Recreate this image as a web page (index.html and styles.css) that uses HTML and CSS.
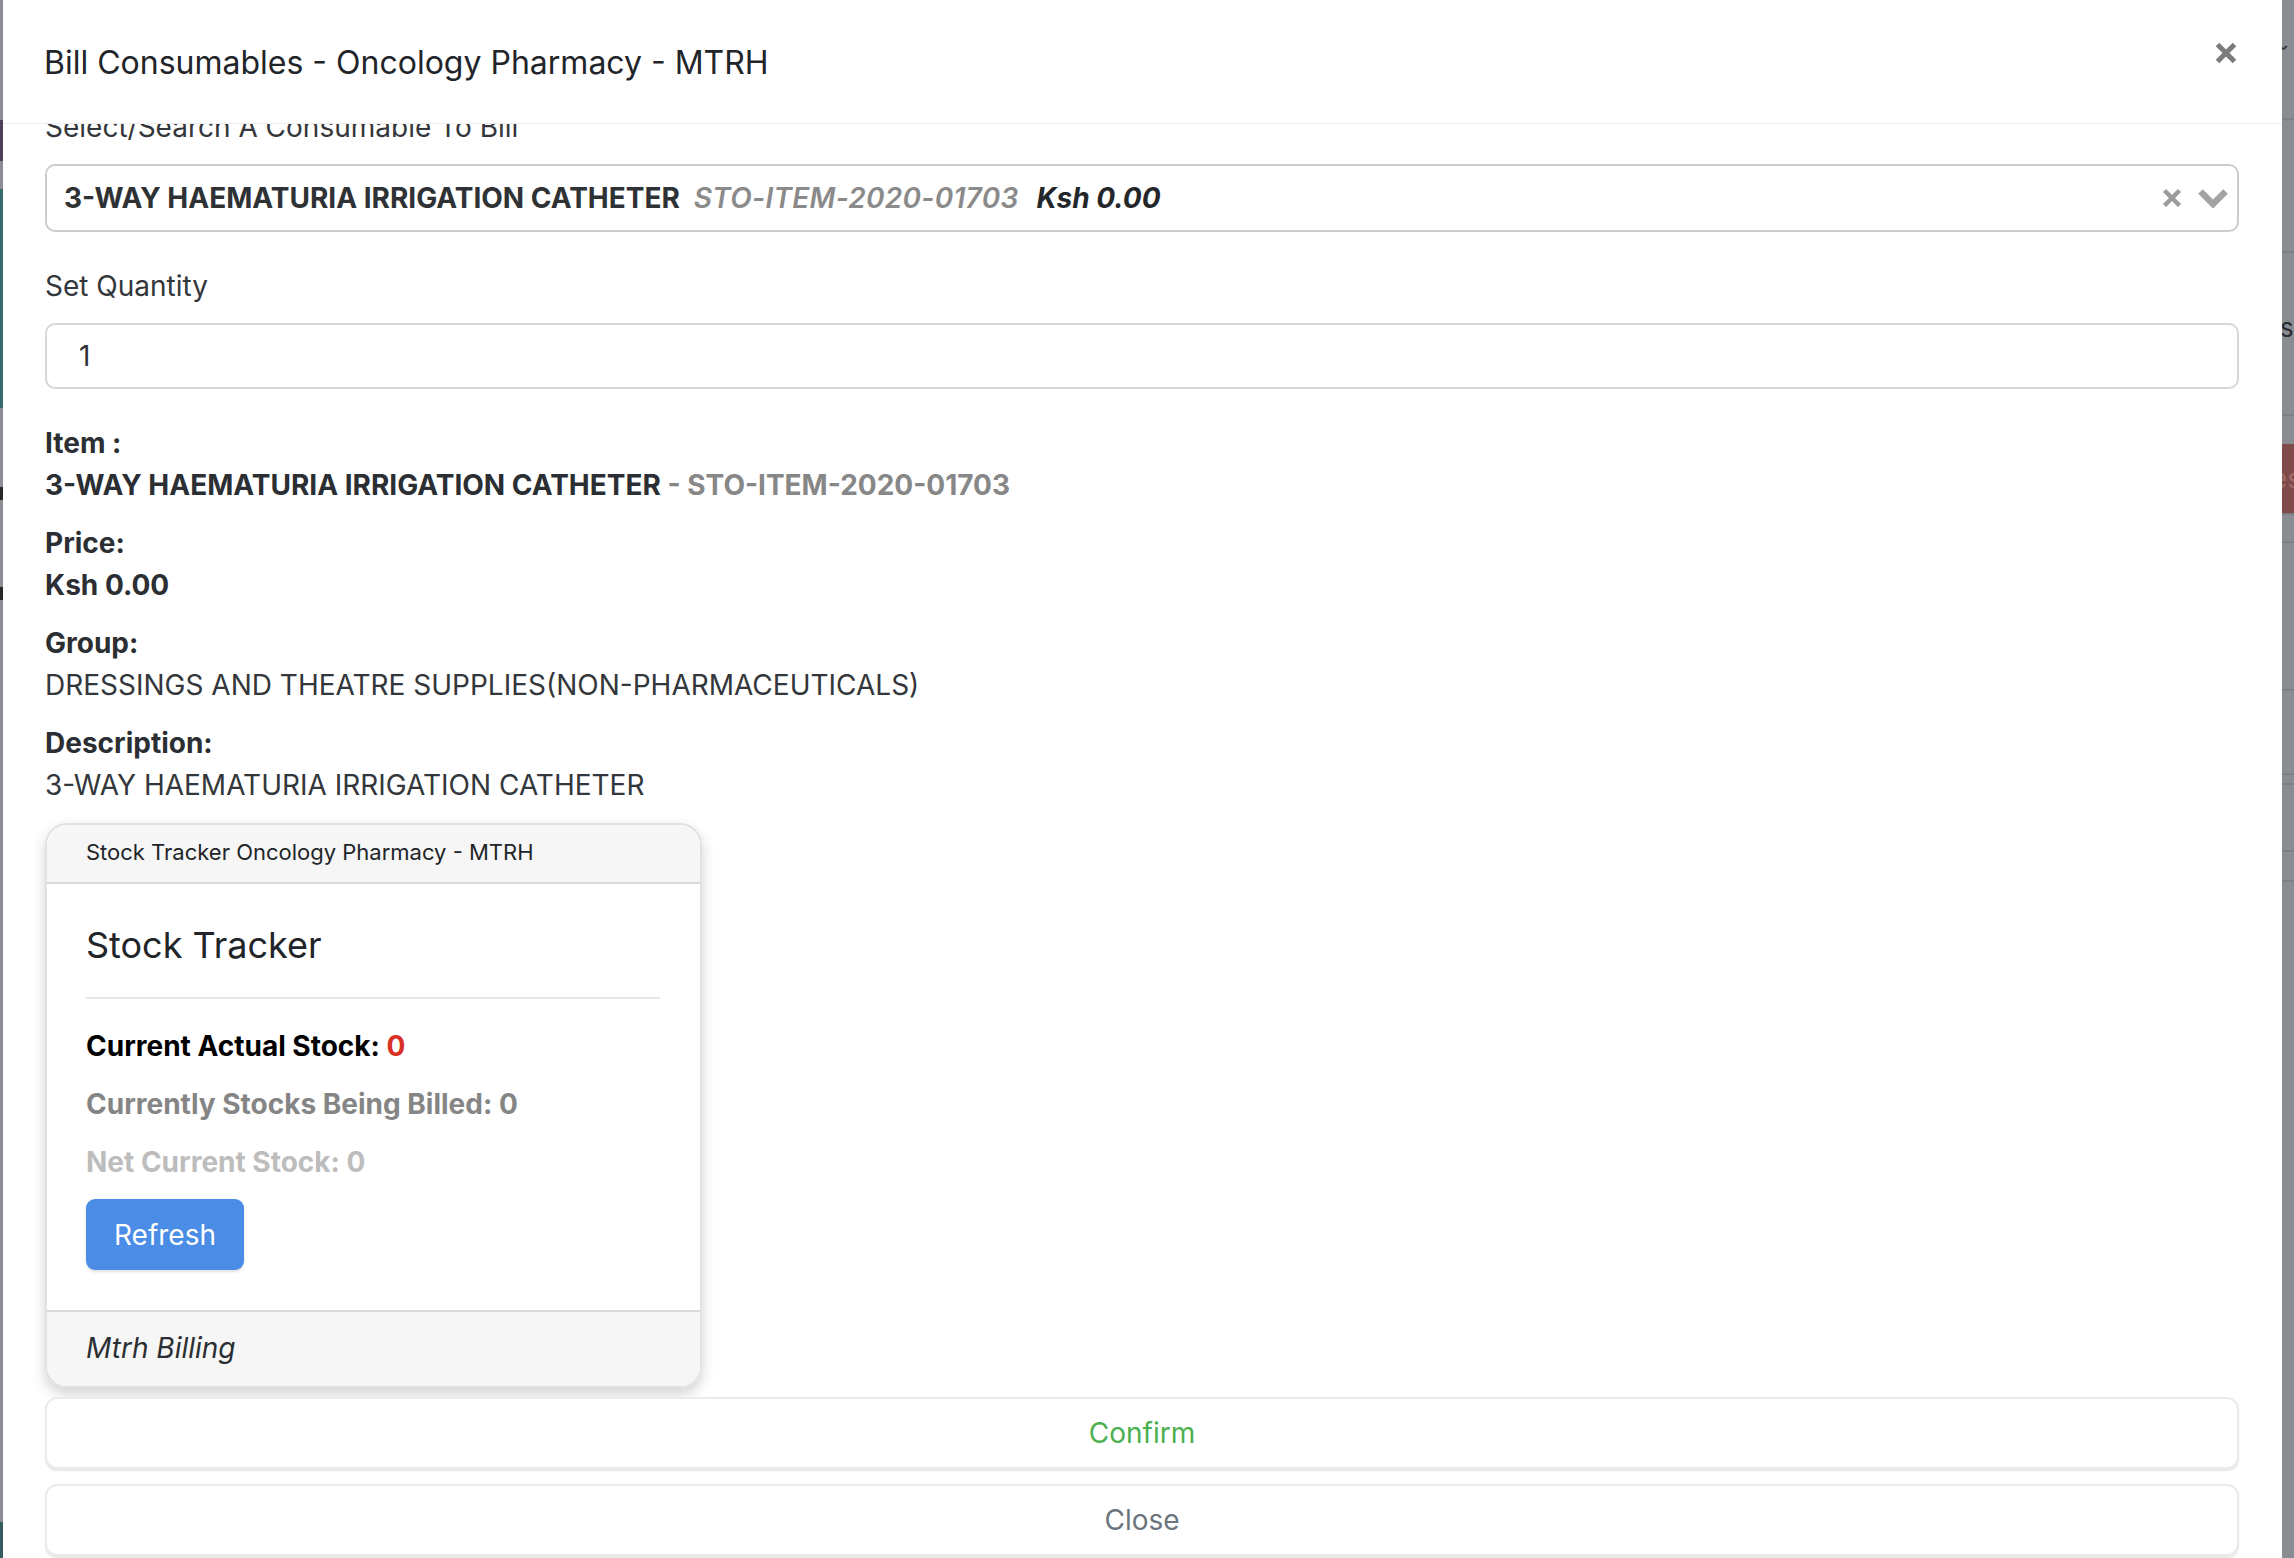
FILE: index.html
```html
<!DOCTYPE html>
<html lang="en">

<head>
  <meta charset="UTF-8" />
  <meta name="viewport" content="width=device-width, initial-scale=1.0" />
  <title>Bill Consumables</title>
  <link rel="stylesheet" href="styles.css">
</head>

<body>
  <div class="backdrop-left"></div>

  <div class="modal">
    <!-- Header -->
    <div class="modal-header">
      <h5 class="modal-title">Bill Consumables - Oncology Pharmacy - MTRH</h5>
      <button class="close-btn" aria-label="Close">
        <svg width="22" height="22" viewBox="0 0 22 22">
          <path d="M2.5 2.5 L19.5 19.5 M19.5 2.5 L2.5 19.5" stroke="#7b7b7b" stroke-width="5" fill="none" />
        </svg>
      </button>
    </div>

    <!-- Body (scrolled a little) -->
    <div class="modal-body">
      <div class="body-inner">
        <label class="field-label">Select/Search A Consumable To Bill</label>
        <div class="select-box">
          <div class="select-value">
            <span class="sel-name">3-WAY HAEMATURIA IRRIGATION CATHETER</span>
            <span class="sel-code">STO-ITEM-2020-01703</span>
            <span class="sel-price">Ksh 0.00</span>
          </div>
          <div class="select-icons">
            <svg width="20" height="20" viewBox="0 0 20 20">
              <path d="M2.5 2.5 L17.5 17.5 M17.5 2.5 L2.5 17.5" stroke="#9c9c9c" stroke-width="4.5" fill="none" />
            </svg>
            <svg width="30" height="20" viewBox="0 0 30 20">
              <polyline points="2.5,3.5 15,16 27.5,3.5" stroke="#a3a3a3" stroke-width="6.5" fill="none" />
            </svg>
          </div>
        </div>

        <label class="field-label" for="qty">Set Quantity</label>
        <input class="qty-input" id="qty" type="text" value="1" />

        <div class="info-block">
          <div class="info-label">Item :</div>
          <div class="info-value strong">3-WAY HAEMATURIA IRRIGATION CATHETER <span class="muted">- STO-ITEM-2020-01703</span></div>
        </div>
        <div class="info-block">
          <div class="info-label">Price:</div>
          <div class="info-value strong">Ksh 0.00</div>
        </div>
        <div class="info-block">
          <div class="info-label">Group:</div>
          <div class="info-value">DRESSINGS AND THEATRE SUPPLIES(NON-PHARMACEUTICALS)</div>
        </div>
        <div class="info-block last">
          <div class="info-label">Description:</div>
          <div class="info-value">3-WAY HAEMATURIA IRRIGATION CATHETER</div>
        </div>

        <!-- Stock tracker card -->
        <div class="stock-card">
          <div class="card-header">Stock Tracker Oncology Pharmacy - MTRH</div>
          <div class="card-body">
            <h4 class="card-title">Stock Tracker</h4>
            <hr />
            <p class="stock-line actual">Current Actual Stock: <span class="zero">0</span></p>
            <p class="stock-line billed">Currently Stocks Being Billed: 0</p>
            <p class="stock-line net">Net Current Stock: 0</p>
            <button class="refresh-btn">Refresh</button>
          </div>
          <div class="card-footer">Mtrh Billing</div>
        </div>

        <button class="action-btn confirm">Confirm</button>
        <button class="action-btn close">Close</button>
      </div>
    </div>
  </div>

  <div class="backdrop-right">
    <div class="seg s1"><span class="caret">&#711;</span></div>
    <div class="seg s2"></div>
    <div class="seg s3"><span class="letter">s</span></div>
    <div class="seg s4"></div>
    <div class="seg s5 danger"><span class="letter light">es</span></div>
    <div class="seg s6"></div>
    <div class="seg s7"></div>
    <div class="seg s8"></div>
    <div class="seg s9"></div>
    <div class="seg s10"></div>
    <div class="seg s11"></div>
  </div>
</body>

</html>
```

FILE: styles.css
```css
* {
  box-sizing: border-box;
}

html,
body {
  margin: 0;
  height: 1558px;
  overflow: hidden;
}

body {
  display: flex;
  flex-direction: row;
  font-family: "Inter", "Noto Sans", sans-serif;
  font-size: 28px;
  line-height: 42px;
  color: #2f3337;
  background-color: #8a8d92;
}

/* page behind the overlay */
.backdrop-left {
  width: 3px;
  flex-shrink: 0;
  background: linear-gradient(to bottom,
      #8c8e93 0, #8c8e93 120px,
      #4b4159 120px, #4b4159 161px,
      #8c8e93 161px, #8c8e93 189px,
      #3b6a6d 189px, #3b6a6d 408px,
      #8c8e93 408px, #8c8e93 487px,
      #26282b 487px, #26282b 500px,
      #8c8e93 500px, #8c8e93 587px,
      #26282b 587px, #26282b 600px,
      #8c8e93 600px, #8c8e93 1522px,
      #365a60 1522px);
}

.backdrop-right {
  width: 12px;
  flex-shrink: 0;
  background-color: #898c91;
  overflow: hidden;
  font-size: 26px;
  line-height: 1;
  color: #2b2d30;
}

.backdrop-right .seg {
  border-bottom: 2px solid #7b7e83;
  position: relative;
  overflow: hidden;
}

.s1 { height: 120px; }
.s2 { height: 133px; }
.s3 { height: 163px; }
.s4 { height: 28px; border-bottom: none !important; }
.s5 { height: 71px; }
.s6 { height: 28px; }
.s7 { height: 148px; }
.s8 { height: 84px; }
.s9 { height: 10px; }
.s10 { height: 67px; }
.s11 { height: 30px; }

.backdrop-right .danger {
  background-color: #7f4a4a;
}

.caret {
  display: block;
  margin: 44px 0 0 -4px;
}

.letter {
  display: block;
  margin: 62px 0 0 -2px;
}

.letter.light {
  margin: 22px 0 0 -10px;
  color: #a06a6a;
}

/* modal */
.modal {
  flex: 1;
  display: flex;
  flex-direction: column;
  background-color: #ffffff;
  height: 1558px;
  box-shadow: 2px 0 3px rgba(0, 0, 0, 0.08);
}

.modal-header {
  height: 124px;
  flex-shrink: 0;
  display: flex;
  align-items: center;
  justify-content: space-between;
  padding: 0 45px 0 41px;
  border-bottom: 1px solid #eeeeee;
  background-color: #ffffff;
  position: relative;
  z-index: 2;
}

.modal-title {
  margin: 0;
  font-size: 32px;
  font-weight: 400;
  line-height: 48px;
  color: #212529;
  padding-top: 2px;
}

.close-btn {
  border: none;
  background: none;
  padding: 0;
  width: 22px;
  height: 22px;
  margin-top: -17px;
  cursor: pointer;
}

.close-btn svg {
  display: block;
}

.modal-body {
  flex: 1;
  overflow: hidden;
  padding: 0 43px 0 42px;
}

.body-inner {
  margin-top: -18px;
}

.field-label {
  display: block;
  margin-bottom: 16px;
  color: #33373b;
}

.select-box {
  height: 68px;
  border: 2px solid #cccccc;
  border-radius: 10px;
  display: flex;
  align-items: center;
  justify-content: space-between;
  padding: 0 9px 0 17px;
  margin-bottom: 33px;
}

.select-value {
  white-space: nowrap;
}

.sel-name {
  font-weight: 700;
  color: #2f3235;
  margin-right: 6px;
}

.sel-code {
  font-style: italic;
  font-weight: 600;
  color: #8a8a8a;
  letter-spacing: 0.3px;
  margin-right: 10px;
}

.sel-price {
  font-style: italic;
  font-weight: 700;
  color: #24272a;
}

.select-icons {
  display: flex;
  align-items: center;
  gap: 16px;
}

.select-icons svg {
  display: block;
}

.qty-input {
  display: block;
  width: 100%;
  height: 66px;
  border: 2px solid #d6d6dc;
  border-radius: 10px;
  padding: 0 32px;
  font-family: inherit;
  font-size: 28px;
  color: #2f3337;
  margin-bottom: 33px;
}

.info-block {
  margin-bottom: 16px;
}

.info-block.last {
  margin-bottom: 17px;
}

.info-label {
  font-weight: 700;
  color: #2b2f33;
}

.info-value {
  color: #33373b;
}

.info-value.strong {
  font-weight: 700;
  color: #2b2f33;
}

.info-value .muted {
  color: #878787;
}

/* stock card */
.stock-card {
  width: 657px;
  border: 2px solid #e1e1e1;
  border-radius: 22px;
  overflow: hidden;
  box-shadow: 0 6px 14px rgba(0, 0, 0, 0.18);
  margin-bottom: 9px;
}

.card-header {
  height: 59px;
  background-color: #f6f6f6;
  border-bottom: 2px solid #dadada;
  padding: 0 0 0 39px;
  font-size: 22px;
  line-height: 55px;
  color: #222528;
}

.card-body {
  padding: 40px 40px 40px 39px;
}

.card-title {
  margin: 0;
  font-size: 36px;
  font-weight: 400;
  line-height: 43px;
  color: #212529;
}

.card-body hr {
  border: none;
  border-top: 2px solid #e6e6e6;
  margin: 30px 0 26px 0;
}

.stock-line {
  margin: 0 0 16px 0;
  font-weight: 700;
}

.stock-line.actual {
  color: #000000;
}

.stock-line.actual .zero {
  color: #d93025;
}

.stock-line.billed {
  color: #858585;
}

.stock-line.net {
  color: #bdbdbd;
}

.refresh-btn {
  display: block;
  width: 158px;
  height: 71px;
  border: none;
  border-radius: 9px;
  background-color: #4a8ce6;
  color: #ffffff;
  font-family: inherit;
  font-size: 28px;
  box-shadow: 0 2px 3px rgba(0, 0, 0, 0.12);
  cursor: pointer;
}

.card-footer {
  height: 76px;
  background-color: #f6f6f6;
  border-top: 2px solid #dadada;
  padding: 0 0 0 39px;
  font-style: italic;
  line-height: 72px;
  color: #2b2f33;
}

/* footer actions */
.action-btn {
  display: block;
  width: 100%;
  height: 72px;
  background-color: #ffffff;
  border: 2px solid #ebebeb;
  border-radius: 12px;
  box-shadow: 0 2px 2px rgba(0, 0, 0, 0.1);
  font-family: inherit;
  font-size: 28px;
  cursor: pointer;
}

.action-btn.confirm {
  color: #4caf50;
  margin-bottom: 15px;
}

.action-btn.close {
  color: #6c757d;
}
```
